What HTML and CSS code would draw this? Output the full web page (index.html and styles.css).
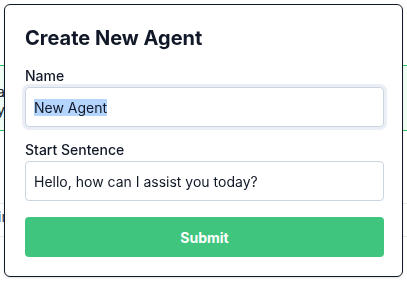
FILE: index.html
```html
<!DOCTYPE html>
<html lang="en">
<head>
<meta charset="utf-8">
<title>Create New Agent</title>
<link rel="stylesheet" href="styles.css">
</head>
<body>
<div class="page">
  <div class="agent-card">
    <p class="agent-line">assistant agent ready</p>
    <p class="agent-line">you can talk to it anytime</p>
  </div>
  <div class="list">
    <div class="list-row">info row</div>
  </div>
</div>

<div class="modal">
  <h2 class="modal-title">Create New Agent</h2>
  <form class="form">
    <label class="field-label" for="name">Name</label>
    <input class="field-input" id="name" type="text" value="New Agent">
    <label class="field-label second" for="sentence">Start Sentence</label>
    <input class="field-input" id="sentence" type="text" value="Hello, how can I assist you today?">
    <button class="submit-btn" type="button">Submit</button>
  </form>
</div>
<script src="app.js"></script>
</body>
</html>
```

FILE: styles.css
```css
* { box-sizing: border-box; }
html, body { margin: 0; padding: 0; }
body {
  width: 407px;
  height: 281px;
  overflow: hidden;
  background: #ffffff;
  font-family: Inter, "Noto Sans", sans-serif;
  color: #111827;
}
.page {
  padding-top: 65px;
}
.agent-card {
  height: 66px;
  background: #f0fdf4;
  border-top: 1px solid #22c55e;
  border-bottom: 1px solid #22c55e;
  padding: 17px 0 0 0;
}
.agent-line {
  margin: 0;
  font-size: 14px;
  line-height: 18px;
  margin-left: -3px;
}
.list {
  margin-top: 72px;
  border-top: 1px solid #e5e7eb;
  border-bottom: 1px solid #e5e7eb;
}
.list-row {
  height: 32px;
  font-size: 14px;
  line-height: 26px;
  margin-left: -2px;
  color: #374151;
}
.modal {
  position: fixed;
  left: 4px;
  top: 4px;
  width: 399px;
  background: #ffffff;
  border: 1px solid #111827;
  border-radius: 6px;
  padding: 19px 18px 19px 20px;
  box-shadow: 0 1px 2px rgba(0,0,0,0.12);
}
.modal-title {
  margin: 0;
  font-size: 20px;
  line-height: 28px;
  font-weight: 700;
  color: #111827;
}
.form {
  display: flex;
  flex-direction: column;
  margin-top: 14px;
}
.field-label {
  font-size: 14px;
  line-height: 20px;
  font-weight: 500;
  color: #111827;
  margin-bottom: 1px;
}
.field-label.second { margin-top: 13px; }
.field-input {
  height: 40px;
  width: 100%;
  border: 1px solid #cbd5e1;
  border-radius: 4px;
  padding: 0 8px;
  font-family: Inter, "Noto Sans", sans-serif;
  font-size: 14px;
  line-height: 18px;
  color: #111827;
  background: #ffffff;
  outline: none;
}
.field-input:focus {
  box-shadow: 0 0 0 3px #ebeff5;
}
.field-input::selection {
  background: #b4d5fe;
  color: #111827;
}
.submit-btn {
  margin-top: 16px;
  height: 40px;
  width: 100%;
  border: none;
  border-radius: 4px;
  background: #40c57e;
  color: #ffffff;
  font-family: Inter, "Noto Sans", sans-serif;
  font-size: 14px;
  font-weight: 700;
}
```

FILE: app.js
```js
var el = document.getElementById('name');
el.focus();
el.select();
```
